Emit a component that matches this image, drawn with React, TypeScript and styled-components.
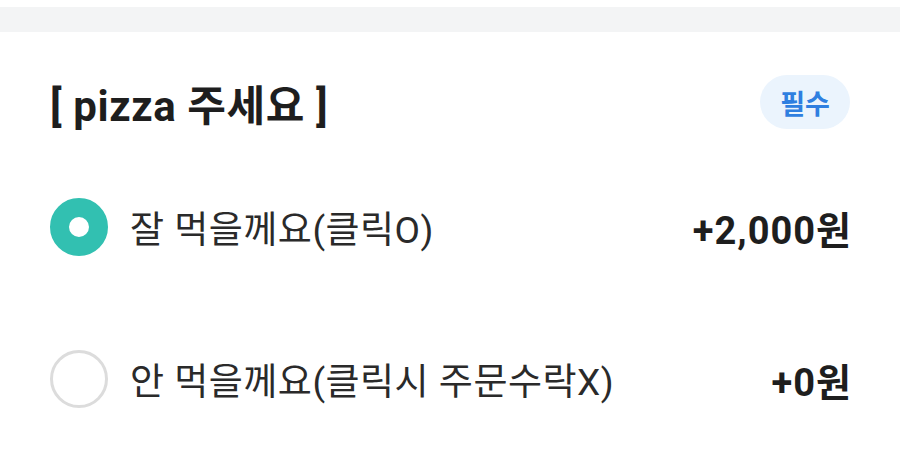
import { createGlobalStyle } from 'styled-components';
import styled from 'styled-components';

const GlobalStyle = createGlobalStyle`
  body {
    margin: 0;
    background: #ffffff;
    font-family: Roboto, "Noto Sans CJK KR", "Noto Sans", sans-serif;
    color: #222222;
  }
`

const Page = styled.div`
  width: 900px;
  height: 453px;
  overflow: hidden;
  padding-top: 7px;
  box-sizing: border-box;
`

const Divider = styled.div`
  height: 25px;
  background: #f3f4f5;
`

const Section = styled.div`
  padding: 43px 50px 0 50px;
`

const Header = styled.div`
  display: flex;
  align-items: center;
  justify-content: space-between;
  height: 54px;
`

const Title = styled.h2`
  margin: 0;
  font-size: 42px;
  font-weight: 700;
  color: #1e1e1e;
  letter-spacing: 0.6px;
`

const Badge = styled.span`
  display: inline-flex;
  align-items: center;
  justify-content: center;
  width: 90px;
  height: 54px;
  border-radius: 27px;
  background: #ebf4fd;
  color: #2f7fe0;
  font-size: 27px;
  font-weight: 700;
`

const Options = styled.div`
  display: flex;
  flex-direction: column;
  margin-top: 69px;
  gap: 94px;
`

const Option = styled.label`
  display: flex;
  align-items: center;
  height: 58px;
  cursor: pointer;
`

const Radio = styled.span<{ $checked: boolean }>`
  width: 58px;
  height: 58px;
  border-radius: 50%;
  box-sizing: border-box;
  flex-shrink: 0;
  background: #ffffff;
  border: ${p => (p.$checked ? '19px solid #32c0b1' : '3px solid #dcdcdc')};
`

const Label = styled.span`
  margin-left: 22px;
  flex: 1;
  font-size: 37px;
  font-weight: 400;
  color: #2a2a2a;
  letter-spacing: 0.5px;
`

const Price = styled.span`
  font-size: 38px;
  font-weight: 700;
  color: #1e1e1e;
  letter-spacing: 1px;
  margin-right: -2px;
`

const options = [
  { label: '잘 먹을께요(클릭O)', price: '+2,000원', checked: true },
  { label: '안 먹을께요(클릭시 주문수락X)', price: '+0원', checked: false },
]

function App() {
  return (
    <Page>
      <GlobalStyle />
      <Divider />
      <Section>
        <Header>
          <Title>[ pizza 주세요 ]</Title>
          <Badge>필수</Badge>
        </Header>
        <Options>
          {options.map(o => (
            <Option key={o.label}>
              <Radio $checked={o.checked} />
              <Label>{o.label}</Label>
              <Price>{o.price}</Price>
            </Option>
          ))}
        </Options>
      </Section>
    </Page>
  );
}

export default App;
